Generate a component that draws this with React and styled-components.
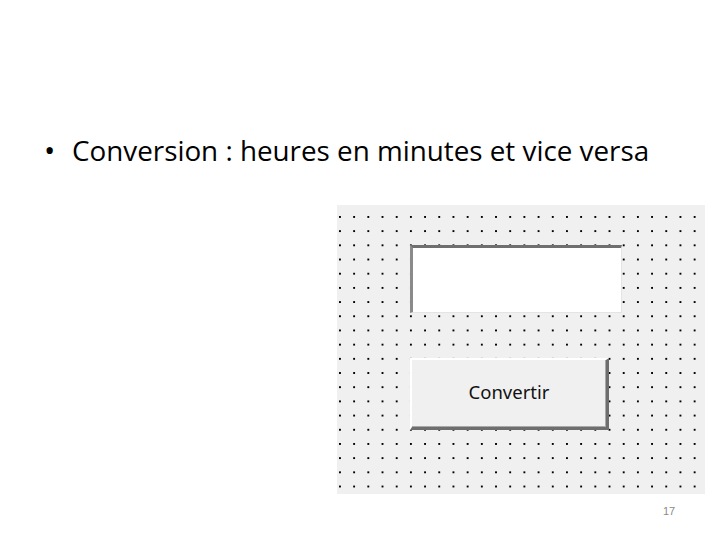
import styled, { createGlobalStyle } from 'styled-components';

const GlobalStyle = createGlobalStyle`
	html, body {
		margin: 0;
		padding: 0;
		background: #ffffff;
	}
`;

const Slide = styled.div`
	width: 720px;
	height: 540px;
	display: flex;
	flex-direction: column;
	background: #ffffff;
	overflow: hidden;
`;

const Bullet = styled.div`
	display: flex;
	align-items: baseline;
	padding: 132px 0 0 44px;
	font-family: 'Open Sans', sans-serif;
	font-size: 27.8px;
	color: #000000;
	line-height: 36px;
	white-space: nowrap;
`;

const Dot = styled.span`
	width: 28px;
	font-size: 30px;
`;

const FormPanel = styled.div`
	margin: 37px 0 0 337px;
	width: 368px;
	height: 289px;
	box-sizing: border-box;
	background-color: #f0f0f0;
	background-image: radial-gradient(circle at 1px 1px, #000 0.9px, transparent 1.2px);
	background-size: 14.2px 14.2px;
	background-position: 2px 11px;
	display: flex;
	flex-direction: column;
	padding: 40px 0 0 73px;
	gap: 45px;
`;

const TextBox = styled.div`
	width: 212px;
	height: 68px;
	box-sizing: border-box;
	background: #ffffff;
	border-top: 3px solid #6f6f6f;
	border-left: 3px solid #8a8a8a;
	border-right: 1px solid #e4e4e4;
	border-bottom: 1px solid #e4e4e4;
`;

const Button = styled.div`
	width: 199px;
	height: 72px;
	box-sizing: border-box;
	background: #f0f0f0;
	border-top: 2px solid #ffffff;
	border-left: 2px solid #ffffff;
	border-right: 3px solid #6e6e6e;
	border-bottom: 3px solid #6e6e6e;
	box-shadow: inset -1px -1px 0 #a8a8a8;
	display: flex;
	align-items: center;
	justify-content: center;
	font-family: 'Noto Sans', sans-serif;
	font-size: 18.5px;
	color: #111111;
	padding-bottom: 4px;
`;

const PageNumber = styled.div`
	margin: 11px 0 0 663px;
	font-family: 'Liberation Sans', sans-serif;
	font-size: 11px;
	color: #8a8a8a;
`;

export default function App() {
	return (
		<>
			<GlobalStyle />
			<Slide>
				<Bullet>
					<Dot>•</Dot>
					<span>Conversion : heures en minutes et vice versa</span>
				</Bullet>
				<FormPanel>
					<TextBox />
					<Button>Convertir</Button>
				</FormPanel>
				<PageNumber>17</PageNumber>
			</Slide>
		</>
	);
}
